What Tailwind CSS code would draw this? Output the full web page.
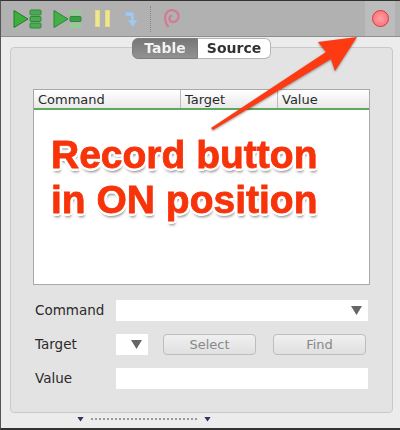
<!DOCTYPE html>
<html lang="en">
<head>
    <meta charset="UTF-8">
    <title>Selenium IDE</title>
    <script src="https://cdn.jsdelivr.net/npm/@tailwindcss/browser@4"></script>
</head>
<body class='bg-[#ececec]'>
<div class="relative w-[400px] h-[430px] overflow-hidden bg-[#ececec] font-['DejaVu_Sans',sans-serif] text-[#2a2a2a] border-l border-[#555] border-t border-t-[#333] border-b-2 border-b-[#333]">
    <div class="blur-[0.4px]">
        <!-- toolbar -->
        <div class="h-[36px] bg-[#b1b1b1] border-b border-[#8f8f8f] flex items-center pl-[12px]">
            <svg width="30" height="20" viewBox="0 0 30 20" class="mr-[10px]">
                <path d="M1 1.500 L1 18.500 L15 10 Z" fill="#3fae3f" stroke="#1c7d2a"/>
                <rect x="17" y="1" width="11" height="5" rx="1" fill="#4cab52" stroke="#2c8a38"/>
                <rect x="17" y="7.500" width="11" height="5" rx="1" fill="#4cab52" stroke="#2c8a38"/>
                <rect x="17" y="14" width="11" height="5" rx="1" fill="#4cab52" stroke="#2c8a38"/>
            </svg>
            <svg width="30" height="20" viewBox="0 0 30 20" class="mr-[12px]">
                <path d="M1 1.500 L1 18.500 L15 10 Z" fill="#45b045" stroke="#24863a"/>
                <rect x="17" y="1" width="11" height="5" fill="#94cd94"/>
                <rect x="17" y="7.500" width="11" height="5" rx="1" fill="#3f9f48" stroke="#2c8a38"/>
                <rect x="17" y="14" width="11" height="5" fill="#94cd94"/>
            </svg>
            <div class="flex gap-[5px] mr-[14px]">
                <div class="w-[5px] h-[17px] bg-[#efe78f] border border-[#e2da85]"></div>
                <div class="w-[5px] h-[17px] bg-[#efe78f] border border-[#e2da85]"></div>
            </div>
            <svg width="16" height="18" viewBox="0 0 16 18" class="mr-[10px]">
                <path d="M1 2 H10 V10 H14 L8.500 17 L3.500 10 H6.500 V6 H1 Z" fill="#a5c8e8" stroke="#8fb6da" stroke-width="0.500"/>
            </svg>
            <div class="h-[26px] border-l border-dotted border-[#8a8a8a] mr-[12px]"></div>
            <svg width="17" height="21" viewBox="0 0 17 21">
                <path d="M5.500 19 C1 14 1 6 5.500 3 C10 0.500 16 3.500 15.500 9 C15 13.500 10.500 15 8 13.500 C5.500 12 6 8 9 7.500" fill="none" stroke="#d27c92" stroke-width="2.200"/>
            </svg>
            <div class="ml-auto mr-[5px] self-stretch w-[30px] bg-[#bcbcbc] flex items-center justify-center">
                <div class="w-[17px] h-[17px] rounded-full bg-radial from-[#ff9fa5] to-[#fb6a72] border border-[#d8383e]"></div>
            </div>
        </div>

        <!-- tab box -->
        <div class="ml-[9px] mr-[7px] mt-[10px] h-[366px] bg-[#e3e3e3] border border-[#c9c9c9] rounded-[4px] relative">
            <div class="absolute -top-[10px] left-[121px] flex h-[21px] text-[14px] font-bold leading-[19px]">
                <div class="w-[66px] text-center bg-gradient-to-b from-[#777] to-[#929292] text-[#f2f2f2] rounded-l-[6px] border border-[#7d7d7d]">Table</div>
                <div class="w-[73px] text-center bg-white text-[#333] rounded-r-[6px] border border-[#b5b5b5] border-l-0">Source</div>
            </div>

            <!-- table -->
            <div class="ml-[22px] mt-[41px] w-[337px] h-[196px] bg-white border border-[#a9a9a9]">
                <div class="h-[20px] flex text-[13px] leading-[19px] bg-gradient-to-b from-white to-[#e9e9e9] border-b-2 border-[#5fa85f]">
                    <div class="w-[147px] pl-[4px] border-r border-[#bbb]">Command</div>
                    <div class="w-[97px] pl-[4px] border-r border-[#bbb]">Target</div>
                    <div class="pl-[4px]">Value</div>
                </div>
            </div>

            <!-- form -->
            <div class="ml-[24px] mt-[15px] grid grid-cols-[81px_1fr] gap-y-[13px] text-[13.500px] w-[333px]">
                <label class="leading-[21px]">Command</label>
                <div class="h-[21px] bg-white flex items-center justify-end pr-[6px]">
                    <div class="w-[11px] h-[9px] bg-[#666] [clip-path:polygon(0_0,100%_0,50%_100%)]"></div>
                </div>
                <label class="leading-[21px]">Target</label>
                <div class="flex h-[21px] text-[13px] text-[#888]">
                    <div class="w-[32px] bg-white flex items-center justify-end pr-[6px] mr-[15px]">
                        <div class="w-[11px] h-[9px] bg-[#666] [clip-path:polygon(0_0,100%_0,50%_100%)]"></div>
                    </div>
                    <button class="w-[93px] rounded-[4px] border border-[#bdbdbd] bg-gradient-to-b from-[#f0f0f0] to-[#e0e0e0] mr-[17px]">Select</button>
                    <button class="w-[93px] rounded-[4px] border border-[#bdbdbd] bg-gradient-to-b from-[#f0f0f0] to-[#e0e0e0]">Find</button>
                </div>
                <label class="leading-[21px]">Value</label>
                <div class="h-[21px] bg-white"></div>
            </div>
        </div>

        <!-- splitter -->
        <div class="ml-[76px] mt-[1px] flex items-center h-[10px] w-[134px]">
            <div class="w-[7px] h-[5px] bg-[#33335f] [clip-path:polygon(0_0,100%_0,50%_100%)]"></div>
            <div class="flex-1 mx-[7px] border-t-2 border-dotted border-[#999]"></div>
            <div class="w-[7px] h-[5px] bg-[#33335f] [clip-path:polygon(0_0,100%_0,50%_100%)]"></div>
        </div>
    </div>

    <!-- annotation -->
    <svg class="absolute left-[-1px] top-[-1px] drop-shadow-[0_1px_1px_rgba(0,0,0,0.4)]" width="400" height="430" viewBox="0 0 400 430">
        <path d="M211 128 L326 52 L318 42 L357 37 L335 71 L331 59 L213 130 Z" fill="#fe3a12"/>
    </svg>
    <div class="absolute left-[50px] top-[131px] text-[39px] leading-[45px] font-bold font-['Liberation_Sans',sans-serif] text-[#f7330a] whitespace-nowrap [-webkit-text-stroke:0.8px_#f7330a] [text-shadow:3px_0_0_#fff,-3px_0_0_#fff,0_3px_0_#fff,0_-3px_0_#fff,2px_2px_0_#fff,-2px_2px_0_#fff,2px_-2px_0_#fff,-2px_-2px_0_#fff,1px_4px_3px_rgba(0,0,0,0.5)]">
        Record button<br>in ON position
    </div>
</div>
</body>
</html>
